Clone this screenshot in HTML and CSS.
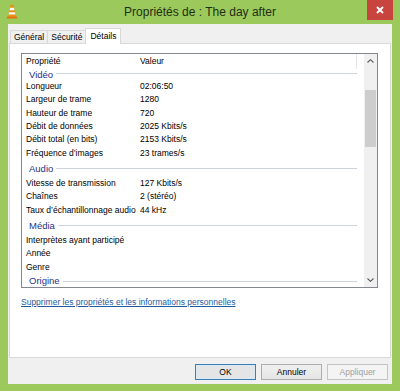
FILE: index.html
```html
<!DOCTYPE html>
<html lang="fr">
<head>
<meta charset="utf-8">
<title>Propriétés de : The day after</title>
<link rel="stylesheet" href="styles.css">
</head>
<body>
<div class="window">
  <div class="titlebar">
    <div class="tb-left">
      <svg class="app-icon" width="12" height="15" viewBox="0 0 12 15">
        <path d="M1.6 12.3 L10.4 12.3 L11.6 14.6 L0.4 14.6 Z" fill="#e2740a"/>
        <path d="M4.7 0.8 L7.3 0.8 L9.7 12.4 L2.3 12.4 Z" fill="#f38b0c"/>
        <path d="M4.1 3.8 L7.9 3.8 L8.4 6.2 L3.6 6.2 Z" fill="#ffffff"/>
        <path d="M3.2 8.3 L8.8 8.3 L9.3 10.6 L2.7 10.6 Z" fill="#ffffff"/>
      </svg>
    </div>
    <div class="title">Propriétés de : The day after</div>
    <div class="tb-right">
      <div class="close">
        <svg width="8" height="8" viewBox="0 0 8 8"><path d="M1 1 L7 7 M7 1 L1 7" stroke="#ffffff" stroke-width="1.8" fill="none"/></svg>
      </div>
    </div>
  </div>
  <div class="client">
    <div class="tabs">
      <div class="tab">Général</div>
      <div class="tab">Sécurité</div>
      <div class="tab active">Détails</div>
    </div>
    <div class="panel">
      <div class="listview">
        <div class="lv-main">
          <div class="lv-header">
            <div class="col-name">Propriété</div>
            <div class="col-value">Valeur</div>
          </div>
          <div class="lv-body">
            <div class="group scrolled"><span class="group-label">Vidéo</span><span class="group-line"></span></div>
            <div class="row"><span class="cell-name">Longueur</span><span class="cell-value">02:06:50</span></div>
            <div class="row"><span class="cell-name">Largeur de trame</span><span class="cell-value">1280</span></div>
            <div class="row"><span class="cell-name">Hauteur de trame</span><span class="cell-value">720</span></div>
            <div class="row"><span class="cell-name">Débit de données</span><span class="cell-value">2025 Kbits/s</span></div>
            <div class="row"><span class="cell-name">Débit total (en bits)</span><span class="cell-value">2153 Kbits/s</span></div>
            <div class="row"><span class="cell-name">Fréquence d’images</span><span class="cell-value">23 trames/s</span></div>
            <div class="group"><span class="group-label">Audio</span><span class="group-line"></span></div>
            <div class="row"><span class="cell-name">Vitesse de transmission</span><span class="cell-value">127 Kbits/s</span></div>
            <div class="row"><span class="cell-name">Chaînes</span><span class="cell-value">2 (stéréo)</span></div>
            <div class="row"><span class="cell-name">Taux d’échantillonnage audio</span><span class="cell-value">44 kHz</span></div>
            <div class="group"><span class="group-label">Média</span><span class="group-line"></span></div>
            <div class="row"><span class="cell-name">Interprètes ayant participé</span><span class="cell-value"></span></div>
            <div class="row"><span class="cell-name">Année</span><span class="cell-value"></span></div>
            <div class="row"><span class="cell-name">Genre</span><span class="cell-value"></span></div>
            <div class="group last"><span class="group-label">Origine</span><span class="group-line"></span></div>
          </div>
        </div>
        <div class="scrollbar">
          <div class="sb-btn">
            <svg width="7" height="4" viewBox="0 0 7 4"><path d="M0.5 3.5 L3.5 0.7 L6.5 3.5" stroke="#5a5a5a" stroke-width="1.1" fill="none"/></svg>
          </div>
          <div class="sb-track"><div class="sb-thumb"></div></div>
          <div class="sb-btn">
            <svg width="7" height="4" viewBox="0 0 7 4"><path d="M0.5 0.5 L3.5 3.3 L6.5 0.5" stroke="#5a5a5a" stroke-width="1.1" fill="none"/></svg>
          </div>
        </div>
      </div>
      <a class="link" href="#">Supprimer les propriétés et les informations personnelles</a>
    </div>
    <div class="buttons">
      <div class="btn default">OK</div>
      <div class="btn">Annuler</div>
      <div class="btn disabled">Appliquer</div>
    </div>
  </div>
</div>
</body>
</html>
```
FILE: styles.css
```css
html, body {
  margin: 0;
  padding: 0;
  width: 400px;
  height: 391px;
  overflow: hidden;
  background: #9bc95b;
}

.window {
  width: 400px;
  height: 391px;
  background: #9bc95b;
  display: flex;
  flex-direction: column;
  font-family: "Liberation Sans", Arial, sans-serif;
  font-size: 8.5px;
  color: #000;
}

.titlebar {
  height: 24px;
  display: grid;
  grid-template-columns: 1fr auto 1fr;
  align-items: start;
}

.tb-left {
  padding: 4px 0 0 6px;
}

.app-icon {
  display: block;
}

.title {
  font-size: 12px;
  line-height: 24px;
  color: #1f2e14;
  white-space: nowrap;
}

.tb-right {
  display: flex;
  justify-content: flex-end;
  padding-right: 7px;
}

.close {
  width: 26px;
  height: 20px;
  background: #c8443f;
  display: flex;
  align-items: center;
  justify-content: center;
}

.client {
  margin: 0 8px 7px 8px;
  flex: 1;
  background: #f0f0f0;
  padding: 4px 1px 0 1px;
  display: flex;
  flex-direction: column;
}

.tabs {
  display: flex;
  align-items: flex-end;
  height: 15px;
  padding-left: 1px;
  position: relative;
  z-index: 1;
}

.tab {
  height: 13px;
  line-height: 12px;
  padding: 0 3px;
  border: 1px solid #d9d9d9;
  border-bottom: none;
  background: #f0f0f0;
  margin-right: -1px;
  box-sizing: border-box;
}

.tab.active {
  height: 16px;
  line-height: 14px;
  background: #ffffff;
  padding: 0 4px;
  margin-bottom: -1px;
}

.panel {
  height: 315px;
  box-sizing: border-box;
  border: 1px solid #d9d9d9;
  background: #ffffff;
  padding: 9px 12px 0 11px;
  display: flex;
  flex-direction: column;
}

.listview {
  height: 235px;
  box-sizing: border-box;
  border: 1px solid #828790;
  display: flex;
  background: #ffffff;
}

.lv-main {
  flex: 1;
  display: flex;
  flex-direction: column;
  min-width: 0;
}

.lv-header {
  height: 15px;
  display: flex;
  background: #ffffff;
  line-height: 15px;
}

.col-name {
  width: 114px;
  padding-left: 4px;
  box-sizing: border-box;
}

.col-value {
  width: 221px;
  padding-left: 4px;
  box-sizing: border-box;
  border-right: 1px solid #e5e5e5;
}

.lv-body {
  flex: 1;
  overflow: hidden;
}

.group {
  height: 17px;
  display: flex;
  align-items: center;
  padding: 1.5px 7px 0 7px;
  box-sizing: border-box;
  color: #1e3287;
  font-size: 9.5px;
}

.group.scrolled {
  height: 11px;
  padding-top: 0;
  align-items: flex-start;
}

.group.scrolled .group-label {
  line-height: 11px;
}

.group.scrolled .group-line {
  margin-top: 4px;
}

.group.last {
  height: 12.5px;
  align-items: flex-start;
  padding-top: 1.5px;
}

.group.last .group-label {
  line-height: 11px;
}

.group.last .group-line {
  margin-top: 5.5px;
}

.group-label {
  line-height: 12px;
  padding-right: 3px;
}

.group-line {
  flex: 1;
  height: 1px;
  background: #ccd3dc;
  margin-top: -1px;
}

.row {
  height: 13.33px;
  line-height: 13.33px;
  display: flex;
  white-space: nowrap;
}

.cell-name {
  width: 114px;
  padding-left: 4px;
  box-sizing: border-box;
}

.cell-value {
  padding-left: 4px;
}

.scrollbar {
  width: 13px;
  background: #f0f0f0;
  display: flex;
  flex-direction: column;
}

.sb-btn {
  height: 14px;
  display: flex;
  align-items: center;
  justify-content: center;
}

.sb-track {
  flex: 1;
  padding-top: 22px;
}

.sb-thumb {
  height: 57px;
  margin: 0 1px;
  background: #cdcdcd;
}

.link {
  margin-top: 8px;
  line-height: 13px;
  color: #1e5c9e;
  text-decoration: underline;
  align-self: flex-start;
}

.buttons {
  display: flex;
  justify-content: flex-end;
  gap: 5px;
  padding: 6px 3px 0 0;
}

.btn {
  width: 61px;
  height: 16px;
  box-sizing: border-box;
  border: 1px solid #acacac;
  background: linear-gradient(#f0f0f0, #e5e5e5);
  text-align: center;
  line-height: 14px;
}

.btn.default {
  border-color: #3c7fb1;
  box-shadow: inset 0 0 0 1px #d8e8f5;
  background: #e5e5e5;
}

.btn.disabled {
  border-color: #c4c4c4;
  background: #f4f4f4;
  color: #a0a0a0;
}
```
